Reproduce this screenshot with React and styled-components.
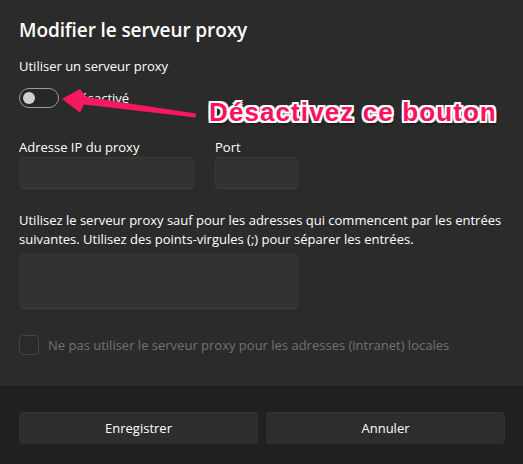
import React from 'react'
import styled, { createGlobalStyle } from 'styled-components'

const GlobalStyle = createGlobalStyle`
  html, body {
    margin: 0;
    padding: 0;
    background: #202020;
  }
  * {
    box-sizing: border-box;
  }
`

const Dialog = styled.div`
  position: relative;
  width: 523px;
  height: 464px;
  display: flex;
  flex-direction: column;
  font-family: 'Open Sans', 'Noto Sans', sans-serif;
  color: #ffffff;
  overflow: hidden;
`

const Body = styled.div`
  flex: 1;
  background: #2b2b2b;
  padding: 16px 18px 0 19px;
  border-bottom: 1px solid #1d1d1d;
`

const Title = styled.h1`
  margin: 0;
  font-size: 19px;
  line-height: 28px;
  font-weight: 600;
  letter-spacing: -0.1px;
`

const Text = styled.div`
  font-size: 13px;
  line-height: ${p => p.lh || '20px'};
  color: ${p => (p.disabled ? '#727272' : '#ffffff')};
  margin-top: ${p => p.mt || '0'};
`

const ToggleRow = styled.div`
  display: flex;
  align-items: center;
  gap: 12px;
  margin-top: 12px;
  height: 20px;
`

const Toggle = styled.div`
  width: 40px;
  height: 20px;
  border: 1px solid #9d9d9d;
  border-radius: 10px;
  background: #272727;
  display: flex;
  align-items: center;
  padding-left: 3px;
`

const Knob = styled.div`
  width: 12px;
  height: 12px;
  border-radius: 50%;
  background: #d0d0d0;
`

const Fields = styled.div`
  display: flex;
  gap: 21px;
  margin-top: 30px;
`

const Field = styled.div`
  display: flex;
  flex-direction: column;
  gap: 1px;
`

const Input = styled.div`
  width: ${p => p.w}px;
  height: ${p => p.h || 32}px;
  margin-top: ${p => p.mt || 0}px;
  background: #323232;
  border: 1px solid #383838;
  border-bottom-color: #3c3c3c;
  border-radius: 4px;
`

const CheckRow = styled.div`
  display: flex;
  align-items: center;
  gap: 9px;
  margin-top: 26px;
`

const Checkbox = styled.div`
  width: 20px;
  height: 20px;
  border: 1px solid #444444;
  border-radius: 4px;
  background: #2a2a2a;
`

const Footer = styled.div`
  background: #202020;
  height: 77px;
  padding: 25px 18px 0 19px;
  display: grid;
  grid-template-columns: 1fr 1fr;
  gap: 8px;
  align-items: start;
`

const Button = styled.button`
  height: 32px;
  background: #2d2d2d;
  border: 1px solid #303030;
  border-top-color: #353535;
  border-radius: 4px;
  color: #ffffff;
  font-family: 'Open Sans', 'Noto Sans', sans-serif;
  font-size: 13px;
`

const Overlay = styled.svg`
  position: absolute;
  left: 0;
  top: 0;
  pointer-events: none;
`

const Callout = styled.div`
  position: absolute;
  left: 209px;
  top: 96px;
  font-family: 'Liberation Sans', Arial, sans-serif;
  font-weight: 700;
  font-size: 26px;
  letter-spacing: 1.1px;
  line-height: 32px;
  color: #ff1160;
  text-shadow:
    -2px -2px 0 #fff, 2px -2px 0 #fff, -2px 2px 0 #fff, 2px 2px 0 #fff,
    0 -2px 0 #fff, 0 2px 0 #fff, -2px 0 0 #fff, 2px 0 0 #fff,
    2px 3px 3px rgba(0, 0, 0, 0.6);
  white-space: nowrap;
`

export default function App() {
  return (
    <>
      <GlobalStyle />
      <Dialog>
        <Body>
          <Title>Modifier le serveur proxy</Title>
          <Text mt="12px">Utiliser un serveur proxy</Text>
          <ToggleRow>
            <Toggle>
              <Knob />
            </Toggle>
            <Text>Désactivé</Text>
          </ToggleRow>
          <Fields>
            <Field>
              <Text lh="18px">Adresse IP du proxy</Text>
              <Input w={175} />
            </Field>
            <Field>
              <Text lh="18px">Port</Text>
              <Input w={83} />
            </Field>
          </Fields>
          <Text mt="22px" lh="19px">
            Utilisez le serveur proxy sauf pour les adresses qui commencent par les entrées
            suivantes. Utilisez des points-virgules (;) pour séparer les entrées.
          </Text>
          <Input w={279} h={55} mt={5} />
          <CheckRow>
            <Checkbox />
            <Text disabled>Ne pas utiliser le serveur proxy pour les adresses (intranet) locales</Text>
          </CheckRow>
        </Body>
        <Footer>
          <Button>Enregistrer</Button>
          <Button>Annuler</Button>
        </Footer>
        <Overlay width="523" height="464" viewBox="0 0 523 464">
          <polygon
            points="62,99 80,89 86,97 196,113.5 195.5,117.5 84,104.5 80,112.5"
            fill="#f7185f"
          />
        </Overlay>
        <Callout>Désactivez ce bouton</Callout>
      </Dialog>
    </>
  )
}
